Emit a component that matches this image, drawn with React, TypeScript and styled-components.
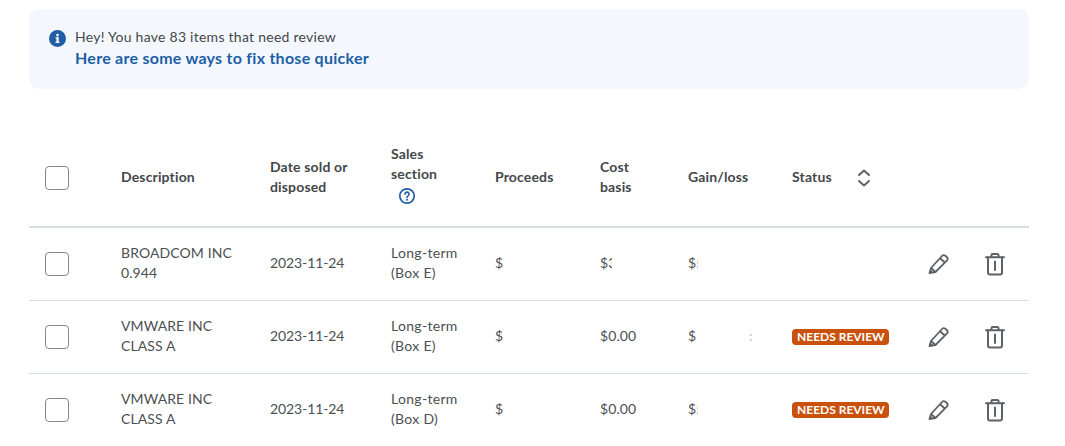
import { createGlobalStyle, styled } from "styled-components";

const GlobalStyle = createGlobalStyle`
  body {
    margin: 0;
    background: #fff;
    font-family: Lato, "Noto Sans", sans-serif;
    color: #393a3d;
  }
`;

const COLUMNS = "76px 149px 121px 104px 105px 88px 104px 136px 57px 1fr";

const Page = styled.div`
  width: 1000px;
  height: 446px;
  overflow: hidden;
  padding: 9px 0 0 29px;
`;

const Banner = styled.div`
  height: 80px;
  box-sizing: border-box;
  padding: 18px 20px;
  display: flex;
  gap: 9px;
  border-radius: 10px;
  background: #f4f8fe;
`;

const BannerIcon = styled.svg`
  width: 17px;
  height: 17px;
  margin-top: 3px;
`;

const BannerText = styled.div`
  font-size: 14px;
  line-height: 20px;
  letter-spacing: 0.26px;
  color: #44474a;
`;

const BannerLink = styled.div`
  font-size: 16px;
  line-height: 21px;
  font-weight: 700;
  letter-spacing: 0.26px;
  color: #215ea5;
`;

const Table = styled.div`
  margin-top: 41px;
`;

const HeaderRow = styled.div`
  display: grid;
  grid-template-columns: 16px ${COLUMNS};
  align-items: center;
  height: 96px;
  border-bottom: 2px solid #d4dfe3;
`;

const Row = styled.div`
  display: grid;
  grid-template-columns: 16px ${COLUMNS};
  align-items: center;
  height: 72px;
  border-bottom: 1px solid #d4dfe3;
`;

const Box = styled.span`
  grid-column: 2;
  display: block;
  width: 22px;
  height: 22px;
  border: 1px solid #7f8c93;
  border-radius: 4px;
  background: #fff;
`;

const HeadCell = styled.div`
  margin-bottom: 2px;
  font-size: 14px;
  line-height: 20px;
  font-weight: 700;
  letter-spacing: 0.15px;
  color: #44474a;
`;

const Cell = styled.div`
  margin-bottom: 2px;
  font-size: 14px;
  line-height: 20px;
  letter-spacing: 0.1px;
  color: #4c4f52;
`;

const DateCell = styled(Cell)`
  letter-spacing: -0.1px;
`;

const SectionCell = styled(Cell)`
  letter-spacing: 0.3px;
`;

const Masked = styled.span<{ $width: number }>`
  display: inline-block;
  vertical-align: top;
  overflow: hidden;
  white-space: nowrap;
  width: ${(p) => p.$width}px;
`;

const Stray = styled.span`
  display: inline-block;
  vertical-align: top;
  margin-left: 53px;
  color: #b9bbbe;
`;

const StatusHead = styled.div`
  display: flex;
  align-items: center;
  gap: 25px;
`;

const StatusCell = styled.div`
  display: flex;
`;

const Badge = styled.span`
  padding: 0 4px 0 5px;
  height: 16px;
  line-height: 16px;
  border-radius: 4px;
  background: #c9510c;
  color: #fff;
  font-size: 12px;
  font-weight: 700;
  white-space: nowrap;
`;

const HelpIcon = styled.svg`
  display: block;
  width: 18px;
  height: 18px;
  margin: 3px 0 5px 7px;
`;

const ActionIcon = styled.svg`
  display: block;
  width: 24px;
  height: 24px;
  margin-left: -2px;
`;

const rows = [
  { name: ["BROADCOM INC", "0.944"], box: "E", proceeds: 9, cost: 12, costText: "$3.21", gain: 10, review: false },
  { name: ["VMWARE INC", "CLASS A"], box: "E", proceeds: 9, cost: 0, costText: "$0.00", gain: 8, review: true },
  { name: ["VMWARE INC", "CLASS A"], box: "D", proceeds: 8, cost: 0, costText: "$0.00", gain: 10, review: true },
];

function Pencil() {
  return (
    <ActionIcon viewBox="0 0 24 24" fill="none" stroke="#5c6267" strokeWidth="1.8" strokeLinejoin="round">
      <path d="M3.500 21 5 16 16 4a2.500 2.500 0 0 1 3.400-.2l1.400 1.200a2.500 2.500 0 0 1 .2 3.400L9.500 20z" />
      <path d="M14 6.300l4.600 4M5 16l4.500 4" />
      <path d="M3 21.500l1.200-4 2.800 2.600z" fill="#5c6267" stroke="none" />
    </ActionIcon>
  );
}

function Trash() {
  return (
    <ActionIcon viewBox="0 0 24 24" fill="none" stroke="#5c6267" strokeWidth="2" strokeLinecap="round" strokeLinejoin="round">
      <path d="M3 5.200h18M8.400 5V3.400a1.400 1.400 0 0 1 1.400-1.400h4.400a1.400 1.400 0 0 1 1.400 1.400V5" />
      <path d="M5 5.500v15a2 2 0 0 0 2 2h10a2 2 0 0 0 2-2v-15M12 9.500v8.500" />
    </ActionIcon>
  );
}

export default function App() {
  return (
    <Page>
      <GlobalStyle />
      <Banner>
        <BannerIcon viewBox="0 0 18 18">
          <circle cx="9" cy="9" r="9" fill="#215ea5" />
          <rect x="7.900" y="7.800" width="2.300" height="5.600" fill="#fff" />
          <rect x="6.800" y="7.800" width="3" height="1.200" fill="#fff" />
          <rect x="6.800" y="12.400" width="4.400" height="1.200" fill="#fff" />
          <circle cx="9" cy="5.400" r="1.400" fill="#fff" />
        </BannerIcon>
        <BannerText>
          Hey! You have 83 items that need review
          <BannerLink>Here are some ways to fix those quicker</BannerLink>
        </BannerText>
      </Banner>
      <Table>
        <HeaderRow>
          <Box />
          <HeadCell>Description</HeadCell>
          <HeadCell>
            Date sold or
            <br />
            disposed
          </HeadCell>
          <HeadCell>
            Sales
            <br />
            section
            <HelpIcon viewBox="0 0 18 18" fill="none">
              <circle cx="9" cy="9" r="7.200" stroke="#215ea5" strokeWidth="1.700" />
              <path d="M6.900 7.200A2.100 2.100 0 1 1 9.900 9.100c-.6.3-.9.6-.9 1.300" stroke="#215ea5" strokeWidth="1.600" strokeLinecap="round" />
              <circle cx="9" cy="12.800" r="1" fill="#215ea5" />
            </HelpIcon>
          </HeadCell>
          <HeadCell>Proceeds</HeadCell>
          <HeadCell>
            Cost
            <br />
            basis
          </HeadCell>
          <HeadCell>Gain/loss</HeadCell>
          <StatusHead>
            <HeadCell>Status</HeadCell>
            <svg width="14" height="20" viewBox="0 0 14 20" fill="none" stroke="#5c6267" strokeWidth="2" strokeLinecap="round" strokeLinejoin="round">
              <path d="M2 7 7 2.500 12 7M2 13 7 17.500 12 13" />
            </svg>
          </StatusHead>
        </HeaderRow>
        {rows.map((row, i) => (
          <Row key={i}>
            <Box />
            <Cell>
              {row.name[0]}
              <br />
              {row.name[1]}
            </Cell>
            <DateCell>2023-11-24</DateCell>
            <SectionCell>
              Long-term
              <br />
              (Box {row.box})
            </SectionCell>
            <Cell>
              <Masked $width={row.proceeds}>$5,204.56</Masked>
            </Cell>
            <Cell>{row.cost ? <Masked $width={row.cost}>{row.costText}</Masked> : row.costText}</Cell>
            <Cell>
              <Masked $width={row.gain}>$5,204.56</Masked>
              {i === 1 && <Stray>:</Stray>}
            </Cell>
            <StatusCell>{row.review && <Badge>NEEDS REVIEW</Badge>}</StatusCell>
            <Pencil />
            <Trash />
          </Row>
        ))}
      </Table>
    </Page>
  );
}
